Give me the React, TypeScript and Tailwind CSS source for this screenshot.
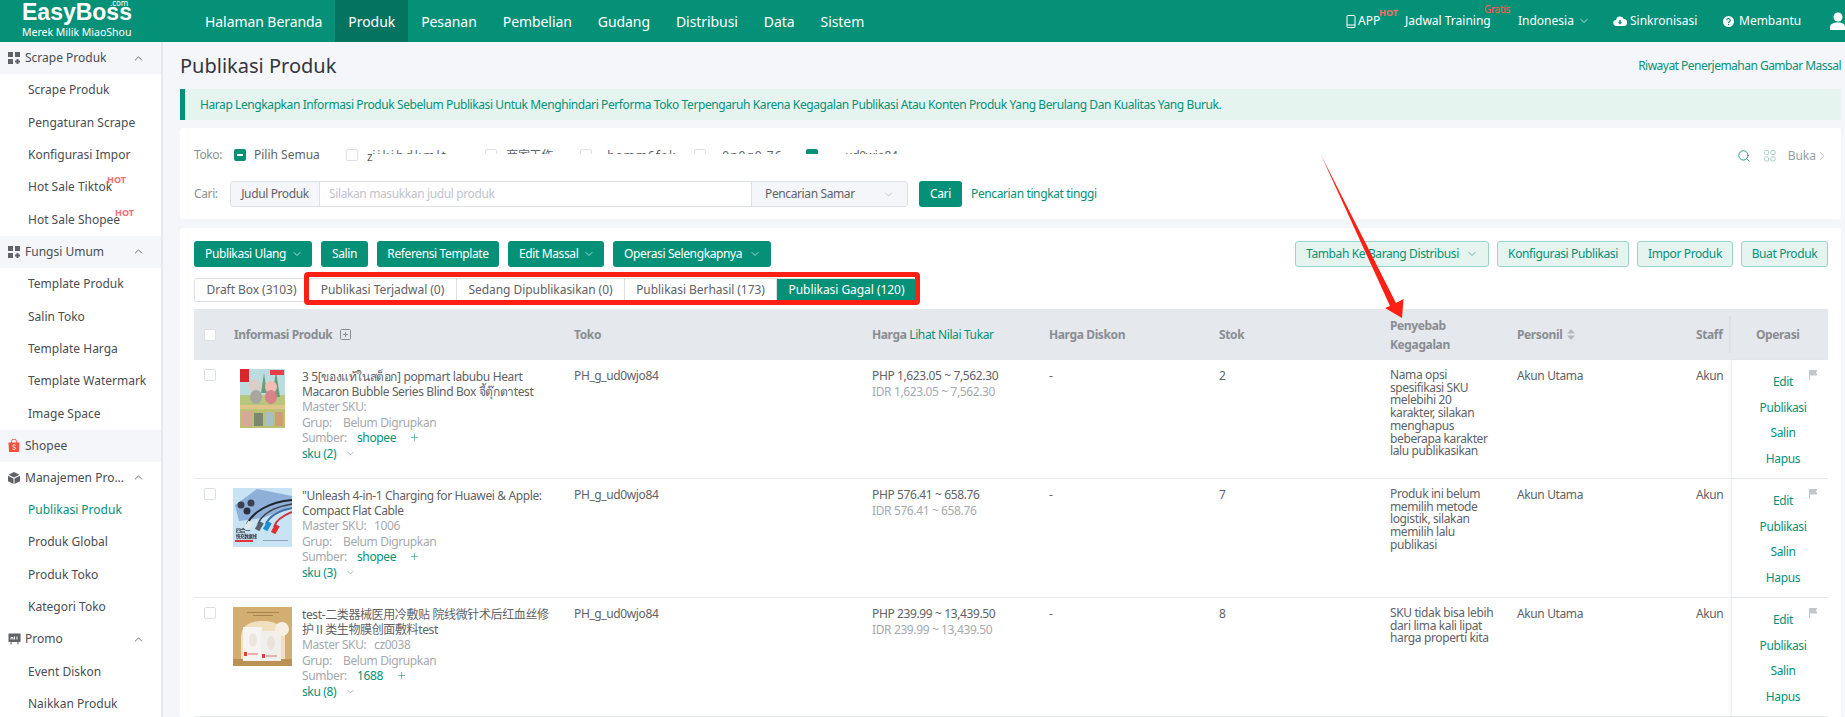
import { ChevronDown, ChevronRight, ChevronUp, Plus, Search } from "lucide-react";
import type { ReactNode } from "react";

const sideGroups = [
  { title: "Scrape Produk", icon: "grid", shade: true, open: true, items: ["Scrape Produk", "Pengaturan Scrape", "Konfigurasi Impor", "Hot Sale Tiktok", "Hot Sale Shopee"] },
  { title: "Fungsi Umum", icon: "grid", shade: true, open: true, items: ["Template Produk", "Salin Toko", "Template Harga", "Template Watermark", "Image Space"] },
  { title: "Shopee", icon: "shopee", shade: true, open: false, items: [] },
  { title: "Manajemen Pro...", icon: "cube", shade: false, open: true, items: ["Publikasi Produk", "Produk Global", "Produk Toko", "Kategori Toko"] },
  { title: "Promo", icon: "promo", shade: false, open: true, items: ["Event Diskon", "Naikkan Produk"] },
];

function GridIcon() {
  return (
    <svg width="12" height="12" viewBox="0 0 12 12" fill="#5f6368">
      <rect x="0" y="0" width="5" height="5" />
      <rect x="7" y="0" width="5" height="5" />
      <rect x="0" y="7" width="5" height="5" />
      <path d="M8.5 7h2v1.5H12v2h-1.5V12h-2v-1.5H7v-2h1.5z" />
    </svg>
  );
}

function SideIcon({ name }: { name: string }) {
  if (name === "grid") return <GridIcon />;
  if (name === "shopee")
    return (
      <svg width="12" height="13" viewBox="0 0 12 13">
        <path d="M0.5 3.5h11l-0.6 9.5H1.1z" fill="#f2523a" />
        <path d="M3.5 4V2.6a2.5 2.5 0 0 1 5 0V4" fill="none" stroke="#f2523a" />
        <path d="M7.6 6.4c-1-.8-3-.6-3 .6 0 1.500 3 .9 3 2.400 0 1.200-2.200 1.300-3.300.4" fill="none" stroke="#fff" strokeWidth="0.9" />
      </svg>
    );
  if (name === "cube")
    return (
      <svg width="12" height="12" viewBox="0 0 12 12" fill="#5f6368">
        <path d="M6 0l5.500 2.700L6 5.400.5 2.700z" />
        <path d="M0 3.700l5.500 2.700V12L0 9.200z" />
        <path d="M12 3.700L6.500 6.400V12L12 9.200z" />
      </svg>
    );
  return (
    <svg width="13" height="12" viewBox="0 0 13 12">
      <rect x="0.500" y="0.500" width="12" height="8.500" fill="#5f6368" />
      <path d="M3 9v2.500M10 9v2.500" stroke="#5f6368" />
      <path d="M3 6.500V4.500h2v2M6.500 6.500V3.500M9 6.500V3.500" stroke="#fff" fill="none" />
    </svg>
  );
}

function Hot({ className }: { className: string }) {
  return <span className={`absolute text-[9px] leading-[9px] font-bold tracking-normal text-[#f56c6c] ${className}`}>HOT</span>;
}

function Sidebar() {
  return (
    <aside className="w-[163px] shrink-0 border-r-2 border-[#e6e8ee] bg-white text-[12px] tracking-normal text-[#4a4d52]">
      {sideGroups.map((group) => (
        <div key={group.title}>
          <div className={`flex h-[32px] items-center pl-[8px] pr-[16px] ${group.shade ? "bg-[#f5f6fa]" : "bg-white"}`}>
            <span className="flex w-[17px] shrink-0 items-center">
              <SideIcon name={group.icon} />
            </span>
            <span>{group.title}</span>
            {group.open && <ChevronUp size={13} strokeWidth={1.4} className="ml-auto text-[#44474b]" />}
          </div>
          {group.items.map((item) => (
            <div key={item} className={`relative flex h-[32.4px] items-center pl-[28px] ${item === "Publikasi Produk" ? "text-[#059178]" : ""}`}>
              {item}
              {item === "Hot Sale Tiktok" && <Hot className="left-[107px] top-[4px]" />}
              {item === "Hot Sale Shopee" && <Hot className="left-[115px] top-[4px]" />}
            </div>
          ))}
        </div>
      ))}
    </aside>
  );
}

function Header() {
  const nav = ["Halaman Beranda", "Produk", "Pesanan", "Pembelian", "Gudang", "Distribusi", "Data", "Sistem"];
  return (
    <header className="flex h-[42px] shrink-0 items-stretch bg-[#059178] text-white">
      <div className="relative w-[192px] shrink-0 pl-[22px] tracking-normal">
        <div className="pt-[1px] font-['Liberation_Sans',sans-serif] text-[23px] font-bold leading-[23px]">EasyBoss</div>
        <span className="absolute left-[110px] top-0 text-[8px] leading-[6px]">.com</span>
        <div className="text-[10.500px] leading-[16px]">Merek Milik MiaoShou</div>
      </div>
      <nav className="flex items-stretch text-[14px] tracking-[-0.07px]">
        {nav.map((item) => (
          <div key={item} className={`flex items-center px-[13px] ${item === "Produk" ? "bg-[#04735f]" : ""}`}>
            {item}
          </div>
        ))}
      </nav>
      <div className="ml-auto flex items-center text-[12px] tracking-normal">
        <div className="relative flex w-[59px] items-center">
          <svg width="10" height="13" viewBox="0 0 10 13" fill="none" stroke="#fff" className="mr-[2px]">
            <rect x="1" y="0.500" width="8" height="12" rx="1" />
            <path d="M1 10h8" />
          </svg>
          APP
          <Hot className="left-[33px] top-[-4px]" />
        </div>
        <div className="relative w-[113px]">
          Jadwal Training
          <span className="absolute left-[79px] top-[-8px] text-[10px] leading-[10px] tracking-[-0.3px] text-[#ff5a4f]">Gratis</span>
        </div>
        <div className="flex w-[95px] items-center">
          Indonesia
          <ChevronDown size={12} strokeWidth={1.5} className="ml-[4px]" />
        </div>
        <div className="flex w-[110px] items-center">
          <svg width="14" height="10" viewBox="0 0 14 10" fill="#fff" className="mr-[3px]">
            <path d="M3.500 10a3 3 0 0 1-.4-6A4 4 0 0 1 10.800 3 3.500 3.500 0 0 1 10.500 10z" />
            <path d="M6.200 4h1.600v2.200h1.400L7 8.500 4.800 6.200h1.400z" fill="#059178" />
          </svg>
          Sinkronisasi
        </div>
        <div className="flex w-[107px] items-center">
          <svg width="11" height="11" viewBox="0 0 11 11" className="mr-[5px]">
            <circle cx="5.500" cy="5.500" r="5.500" fill="#fff" />
            <path d="M3.800 4.300a1.700 1.700 0 1 1 2.600 1.400c-.6.400-.9.600-.9 1.200" fill="none" stroke="#059178" strokeWidth="1.100" />
            <circle cx="5.500" cy="8.500" r="0.700" fill="#059178" />
          </svg>
          Membantu
        </div>
        <svg width="15" height="18" viewBox="0 0 15 18" fill="#fff">
          <circle cx="8" cy="5" r="4.500" />
          <path d="M0 18v-3c0-3 3-4.500 8-4.500s7 1.500 7 4.500v3z" />
        </svg>
      </div>
    </header>
  );
}

function Box({ state }: { state?: "mixed" | "white" }) {
  if (state === "mixed")
    return (
      <span className="flex h-[12px] w-[12px] shrink-0 items-center justify-center rounded-[2px] bg-[#059178]">
        <span className="h-[2px] w-[6px] bg-white" />
      </span>
    );
  return <span className="block h-[12px] w-[12px] shrink-0 rounded-[2px] border border-[#dcdfe6] bg-white" />;
}

function Clip({ width, className, children }: { width: string; className?: string; children: ReactNode }) {
  return <span className={`block h-[5px] shrink-0 overflow-hidden leading-[13px] ${width} ${className ?? ""}`}>{children}</span>;
}

function Filters() {
  return (
    <section className="h-[91px] rounded-[3px] bg-white pl-[14px] pr-[12px] pt-[21px] text-[12px]">
      <div className="flex h-[12px] items-start">
        <span className="w-[40px] leading-[12px] text-[#8c8f94]">Toko:</span>
        <Box state="mixed" />
        <span className="ml-[8px] w-[92px] leading-[12px] tracking-normal text-[#5f6368]">Pilih Semua</span>
        <Box />
        <span className="ml-[9px] mt-[2px] leading-[11px] text-[#5f6368]">z</span>
        <Clip width="w-[113px]" className="text-[#5f6368]">
          <span className="tracking-[2px]">ijkihdkmlt</span>
        </Clip>
        <Clip width="w-[12px]">
          <Box />
        </Clip>
        <Clip width="w-[83px]" className="pl-[9px] text-[#5f6368]">商家工作</Clip>
        <Clip width="w-[12px]">
          <Box />
        </Clip>
        <Clip width="w-[102px]" className="pl-[15px] text-[#5f6368]">
          <span className="tracking-[1px]">hamm6fok</span>
        </Clip>
        <Clip width="w-[12px]">
          <Box />
        </Clip>
        <Clip width="w-[100px]" className="pl-[16px] text-[#5f6368]">
          <span className="tracking-[1px]">9n9g9.76</span>
        </Clip>
        <Clip width="w-[12px]">
          <Box state="mixed" />
        </Clip>
        <Clip width="w-[90px]" className="pl-[27px] text-[#5f6368]">ud0wjo84</Clip>
        <div className="ml-auto flex items-center text-[#9a9da2]">
          <Search size={14} strokeWidth={1.7} className="text-[#2f9685]" />
          <svg width="12" height="12" viewBox="0 0 12 12" fill="none" stroke="#a9d2c9" className="ml-[13px]">
            <rect x="0.500" y="0.500" width="4" height="4" rx="1" />
            <rect x="7" y="0.500" width="4" height="4" rx="1" />
            <rect x="0.500" y="7" width="4" height="4" rx="1" />
            <rect x="7" y="7" width="4" height="4" rx="1" />
          </svg>
          <span className="ml-[12px] leading-[12px] tracking-normal">Buka</span>
          <ChevronRight size={14} strokeWidth={1.2} className="ml-[-1px]" />
        </div>
      </div>
      <div className="mt-[20px] flex items-stretch">
        <span className="flex w-[36px] items-center text-[#8c8f94]">Cari:</span>
        <div className="flex h-[26px] w-[678px] overflow-hidden rounded-[3px] border border-[#dcdfe6]">
          <span className="flex w-[89px] items-center justify-center border-r border-[#dcdfe6] bg-[#f5f6fa] text-[#5f6368]">Judul Produk</span>
          <span className="flex flex-1 items-center pl-[9px] text-[#c0c4cc]">Silakan masukkan judul produk</span>
          <span className="flex w-[156px] items-center border-l border-[#dcdfe6] bg-[#f5f6fa] pl-[13px] pr-[12px] text-[#5f6368]">
            Pencarian Samar
            <ChevronDown size={13} strokeWidth={1} className="ml-auto text-[#a0a3a8]" />
          </span>
        </div>
        <button className="ml-[11px] h-[26px] w-[43px] rounded-[3px] bg-[#059178] text-white">Cari</button>
        <span className="ml-[9px] flex items-center text-[#059178]">Pencarian tingkat tinggi</span>
      </div>
    </section>
  );
}

function SolidButton({ label, width, caret, gap }: { label: string; width: string; caret?: boolean; gap?: string }) {
  return (
    <button className={`flex h-[26px] items-center rounded-[3px] bg-[#059178] text-white ${caret ? `justify-start pl-[11px] ${gap ?? "gap-[5px]"}` : "justify-center"} ${width}`}>
      {label}
      {caret && <ChevronDown size={12} strokeWidth={1.3} />}
    </button>
  );
}

function LightButton({ label, width, caret }: { label: string; width: string; caret?: boolean }) {
  return (
    <button className={`flex h-[26px] items-center justify-center gap-[7px] rounded-[3px] border border-[#9bd3c9] bg-[#e6f4f0] text-[#059178] ${width}`}>
      {label}
      {caret && <ChevronDown size={12} strokeWidth={1.2} />}
    </button>
  );
}

const tabs = [
  { label: "Draft Box (3103)", width: "w-[114px]" },
  { label: "Publikasi Terjadwal (0)", width: "w-[148px]" },
  { label: "Sedang Dipublikasikan (0)", width: "w-[168px]" },
  { label: "Publikasi Berhasil (173)", width: "w-[152px]" },
  { label: "Publikasi Gagal (120)", width: "w-[139px]" },
];

const columns = "grid grid-cols-[39px_341px_298px_177px_170px_171px_127px_179px_35px_97px]";

function TableHead() {
  return (
    <div className={`${columns} h-[51px] items-center bg-[#e5e8ec] text-[12px] font-bold text-[#8a8d92]`}>
      <div className="pl-[10px]">
        <Box />
      </div>
      <div className="flex items-center gap-[8px] pl-[1px]">
        Informasi Produk
        <svg width="11" height="11" viewBox="0 0 11 11" fill="none" stroke="#8a8d92">
          <rect x="0.500" y="0.500" width="10" height="10" rx="1" />
          <path d="M5.500 3v5M3 5.500h5" />
        </svg>
      </div>
      <div>Toko</div>
      <div>
        Harga <span className="font-normal text-[#059178]">Lihat Nilai Tukar</span>
      </div>
      <div>Harga Diskon</div>
      <div>Stok</div>
      <div className="leading-[19px]">
        Penyebab
        <br />
        Kegagalan
      </div>
      <div className="flex items-center gap-[5px]">
        Personil
        <svg width="8" height="11" viewBox="0 0 8 11" fill="#b5b8bd">
          <path d="M4 0l4 4.500H0zM4 11L0 6.500h8z" />
        </svg>
      </div>
      <div className="flex h-[37px] items-center overflow-hidden border-r-2 border-[#dcdfe4]">Staff</div>
      <div className="pl-[25px]">Operasi</div>
    </div>
  );
}

function ImageOne() {
  return (
    <svg width="45" height="59" viewBox="0 0 45 59" className="blur-[0.4px]">
      <rect width="45" height="41" fill="#bcdde0" />
      <rect y="26" width="45" height="15" fill="#b7c77c" />
      <path d="M24 4l3 20h-6zM36 2l4 26h-8z" fill="#6f9c78" />
      <rect x="0" y="0" width="9" height="13" fill="#d8262b" />
      <rect x="30" y="1" width="14" height="5" fill="#e8404a" />
      <circle cx="15" cy="17" r="6.500" fill="#d9cfc6" />
      <ellipse cx="16" cy="28" rx="6" ry="7" fill="#a9a6a0" />
      <circle cx="31" cy="18" r="6" fill="#f1bcb4" />
      <ellipse cx="31" cy="28" rx="6" ry="7" fill="#d9828a" />
      <rect y="36" width="45" height="4" fill="#e0c58a" />
      <rect y="41" width="45" height="18" fill="#bcc071" />
      <rect x="2" y="42" width="10" height="15" fill="#d9a79a" />
      <rect x="14" y="44" width="9" height="13" fill="#7b8770" />
      <rect x="25" y="43" width="8" height="14" fill="#a9c0c2" />
      <rect x="35" y="43" width="8" height="14" fill="#cd9d78" />
    </svg>
  );
}

function ImageTwo() {
  return (
    <svg width="59" height="59" viewBox="0 0 59 59" className="blur-[0.3px]">
      <rect width="59" height="59" fill="#c8e4f4" />
      <path d="M2 17L24 1l35 7v10L30 30 6 33z" fill="#8eb0d8" />
      <circle cx="8" cy="17" r="3.500" fill="#39404f" />
      <circle cx="18" cy="15" r="3.500" fill="#39404f" />
      <circle cx="14" cy="23" r="3.500" fill="#2b3040" />
      <path d="M14 36c6-12 22-22 45-24" fill="none" stroke="#20252c" strokeWidth="2" />
      <path d="M25 36c4-10 16-17 34-20" fill="none" stroke="#3a3f46" strokeWidth="1.500" />
      <path d="M33 36c3-7 12-13 26-16" fill="none" stroke="#3a6ea8" strokeWidth="2" />
      <path d="M41 39c2-7 8-11 18-15" fill="none" stroke="#c8353a" strokeWidth="2" />
      <rect x="13" y="33" width="5" height="8" fill="#e5e8ea" transform="rotate(30 15 37)" />
      <rect x="24" y="34" width="5" height="9" fill="#59626c" transform="rotate(30 27 38)" />
      <rect x="32" y="34" width="5" height="9" fill="#1d8fd0" transform="rotate(30 35 38)" />
      <rect x="40" y="37" width="5" height="9" fill="#e02d33" transform="rotate(30 43 41)" />
      <text x="3" y="44" fontSize="5" fontWeight="700" fill="#2a2f36" fontFamily="Noto Sans CJK SC">四合一</text>
      <text x="3" y="50" fontSize="4.500" fontWeight="700" fill="#2a2f36" fontFamily="Noto Sans CJK SC">快充数据线</text>
      <rect x="2" y="52" width="18" height="2" fill="#e3363a" />
      <rect x="30" y="52" width="25" height="1" fill="#8fa5b5" />
    </svg>
  );
}

function ImageThree() {
  return (
    <svg width="59" height="59" viewBox="0 0 59 59" className="blur-[0.4px]">
      <rect width="59" height="59" fill="#d3ae72" />
      <rect x="14" y="5" width="32" height="1" fill="#a8844c" />
      <rect x="20" y="8" width="20" height="1" fill="#a8844c" />
      <path d="M8 59V30c0-12 10-16 22-16s22 5 22 16v29z" fill="#f1e0bf" />
      <rect y="52" width="59" height="7" fill="#bb9155" />
      <rect x="10" y="20" width="19" height="34" fill="#f6f4f1" />
      <rect x="28" y="24" width="20" height="30" fill="#f1efec" />
      <rect x="11" y="45" width="3" height="4" fill="#e2403c" />
      <rect x="29" y="47" width="3" height="4" fill="#e2403c" />
      <rect x="15" y="46" width="10" height="2" fill="#e7b0a8" />
      <rect x="33" y="48" width="11" height="2" fill="#e7b0a8" />
      <circle cx="49" cy="22" r="7" fill="#f6efe4" />
      <ellipse cx="20" cy="33" rx="4" ry="7" fill="#ebe5dd" />
      <ellipse cx="38" cy="36" rx="4" ry="7" fill="#e8e2d9" />
    </svg>
  );
}

const rows = [
  {
    image: <ImageOne />,
    title: "3 5[ของแท้ในสต็อก] popmart labubu Heart Macaron Bubble Series Blind Box จี้ตุ๊กตาtest",
    master: "",
    source: "shopee",
    sku: "sku (2)",
    php: "PHP 1,623.05 ~ 7,562.30",
    idr: "IDR 1,623.05 ~ 7,562.30",
    stock: "2",
    reason: "Nama opsi spesifikasi SKU melebihi 20 karakter, silakan menghapus beberapa karakter lalu publikasikan",
  },
  {
    image: <ImageTwo />,
    title: '"Unleash 4-in-1 Charging for Huawei & Apple: Compact Flat Cable',
    master: "1006",
    source: "shopee",
    sku: "sku (3)",
    php: "PHP 576.41 ~ 658.76",
    idr: "IDR 576.41 ~ 658.76",
    stock: "7",
    reason: "Produk ini belum memilih metode logistik, silakan memilih lalu publikasi",
  },
  {
    image: <ImageThree />,
    title: "test-二类器械医用冷敷贴 院线微针术后红血丝修护Ⅱ类生物膜创面敷料test",
    master: "cz0038",
    source: "1688",
    sku: "sku (8)",
    php: "PHP 239.99 ~ 13,439.50",
    idr: "IDR 239.99 ~ 13,439.50",
    stock: "8",
    reason: "SKU tidak bisa lebih dari lima kali lipat harga properti kita",
  },
];

function TableRow({ row }: { row: (typeof rows)[number] }) {
  return (
    <div className={`${columns} h-[119px] border-b border-[#e8ebf0] text-[12px] leading-[15px] text-[#606266]`}>
      <div className="pl-[10px] pt-[9px]">
        <Box />
      </div>
      <div className="flex pt-[9px]">
        <div className="flex h-[59px] w-[69px] shrink-0 justify-center pr-[10px]">{row.image}</div>
        <div className="w-[250px]">
          <div>{row.title}</div>
          <div className="flex text-[#a6a9ad]">
            <span className="w-[72px]">Master SKU:</span>
            {row.master}
          </div>
          <div className="mt-[1px] flex text-[#a6a9ad]">
            <span className="w-[41px]">Grup:</span>Belum Digrupkan
          </div>
          <div className="flex items-center text-[#a6a9ad]">
            <span className="w-[55px]">Sumber:</span>
            <span className="text-[#059178]">{row.source}</span>
            <Plus size={11} strokeWidth={1.2} className="ml-[13px] text-[#059178]" />
          </div>
          <div className="mt-[1px] flex items-center text-[#059178]">
            {row.sku}
            <ChevronDown size={11} strokeWidth={1.1} className="ml-[9px] text-[#777a7f]" />
          </div>
        </div>
      </div>
      <div className="pt-[8px]">PH_g_ud0wjo84</div>
      <div className="pt-[8px] leading-[16px]">
        <div>{row.php}</div>
        <div className="text-[#a6a9ad]">{row.idr}</div>
      </div>
      <div className="pt-[8px]">-</div>
      <div className="pt-[8px]">{row.stock}</div>
      <div className="pt-[9px]">
        <div className="w-[108px] leading-[12.700px]">{row.reason}</div>
      </div>
      <div className="pt-[8px]">Akun Utama</div>
      <div className="pt-[8px]">
        <div className="w-[31px] overflow-hidden whitespace-nowrap">Akun Utama</div>
      </div>
      <div className="relative flex flex-col items-center border-l border-[#eef0f4] pl-[6px] pt-[14px] leading-[15px] text-[#059178] shadow-[-2px_0_3px_rgba(0,0,0,0.03)]">
        <span className="mb-[10.500px]">Edit</span>
        <span className="mb-[10.500px]">Publikasi</span>
        <span className="mb-[10.500px]">Salin</span>
        <span>Hapus</span>
        <svg width="9" height="10" viewBox="0 0 9 10" fill="#c2c5ca" className="absolute right-[10px] top-[10px]">
          <path d="M0 0h8.500L7 2.500 8.500 5.500H1V10H0z" />
        </svg>
      </div>
    </div>
  );
}

function ProductCard() {
  return (
    <section className="mt-[9px] flex-1 rounded-[3px] bg-white pl-[14px] pr-[13px] pt-[13px] text-[12px]">
      <div className="flex gap-[9px]">
        <SolidButton label="Publikasi Ulang" width="w-[118px]" caret />
        <SolidButton label="Salin" width="w-[47px]" />
        <SolidButton label="Referensi Template" width="w-[122px]" />
        <SolidButton label="Edit Massal" width="w-[96px]" caret />
        <SolidButton label="Operasi Selengkapnya" width="w-[158px]" caret gap="gap-[7px]" />
        <div className="ml-auto flex gap-[8px]">
          <LightButton label="Tambah Ke Barang Distribusi" width="w-[194px]" caret />
          <LightButton label="Konfigurasi Publikasi" width="w-[132px]" />
          <LightButton label="Impor Produk" width="w-[96px]" />
          <LightButton label="Buat Produk" width="w-[87px]" />
        </div>
      </div>
      <div className="mt-[11px] flex h-[24px] w-fit overflow-hidden rounded-[3px] border border-[#dcdfe6] tracking-[-0.05px] text-[#606266]">
        {tabs.map((tab, i) => (
          <div
            key={tab.label}
            className={`flex items-center justify-center ${tab.width} ${i === 4 ? "bg-[#059178] text-white" : "border-r border-[#dcdfe6]"}`}
          >
            {tab.label}
          </div>
        ))}
      </div>
      <div className="mt-[7px]">
        <TableHead />
        {rows.map((row) => (
          <TableRow key={row.sku} row={row} />
        ))}
      </div>
    </section>
  );
}

export default function App() {
  return (
    <div className="relative flex h-[717px] w-[1845px] flex-col overflow-hidden bg-[#f5f6fa] font-['Noto_Sans','Noto_Sans_CJK_SC',sans-serif] tracking-[-0.38px]">
      <Header />
      <div className="flex min-h-0 flex-1">
        <Sidebar />
        <main className="flex min-w-0 flex-1 flex-col pl-[17px] pr-[4px]">
          <div className="flex h-[47px] shrink-0 items-center justify-between">
            <h1 className="text-[20px] tracking-normal text-[#33363a]">Publikasi Produk</h1>
            <span className="text-[12px] tracking-[-0.52px] text-[#059178]">Riwayat Penerjemahan Gambar Massal</span>
          </div>
          <div className="flex h-[31px] shrink-0 items-center border-l-[5px] border-[#059178] bg-[#e6f4f0] pl-[15px] text-[12px] tracking-[-0.41px] text-[#059178]">
            Harap Lengkapkan Informasi Produk Sebelum Publikasi Untuk Menghindari Performa Toko Terpengaruh Karena Kegagalan Publikasi Atau Konten Produk Yang Berulang Dan Kualitas Yang Buruk.
          </div>
          <div className="mt-[8px]">
            <Filters />
          </div>
          <ProductCard />
        </main>
      </div>
      {/* red annotation drawn on top of the screenshot */}
      <div className="pointer-events-none absolute left-[304px] top-[272px] h-[33px] w-[616px] rounded-[4px] border-[5px] border-[#ff2015]" />
      <svg width="100" height="175" viewBox="0 0 100 175" className="pointer-events-none absolute left-[1315px] top-[150px]" fill="#ff2015">
        <path d="M6 5L81 153 88.500 149 87 168 70 158 75 156z" />
      </svg>
    </div>
  );
}
